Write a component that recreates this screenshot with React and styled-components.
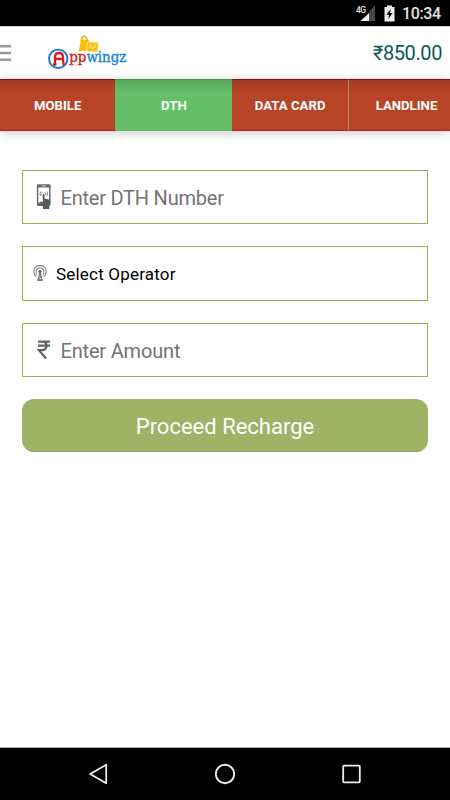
import React from "react";
import styled, { createGlobalStyle } from "styled-components";

const Global = createGlobalStyle`
  * { box-sizing: border-box; }
  body { margin: 0; background: #fff; font-family: Roboto, "Noto Sans", sans-serif; overflow: hidden; }
  svg { display: block; flex: none; }
`;

const Screen = styled.div`
  width: 450px;
  height: 800px;
  display: flex;
  flex-direction: column;
  overflow: hidden;
  background: #fff;
`;

const StatusBar = styled.div`
  height: 26px;
  flex: none;
  display: flex;
  align-items: center;
  justify-content: flex-end;
  gap: 8px;
  padding-right: 8px;
  background: #000;
  color: #e4e4e4;
`;

const Clock = styled.span`
  width: 40px;
  margin-left: -1px;
  font-size: 16px;
  font-weight: 500;
  letter-spacing: -0.35px;
  line-height: 26px;
  padding-top: 2px;
  white-space: nowrap;
`;

const Header = styled.header`
  height: 53px;
  flex: none;
  display: flex;
  align-items: center;
  padding-right: 8px;
  border-top: 1px solid #d4d4d4;
  background: #fff;
`;

const Logo = styled.div`
  margin-left: 36px;
`;

const Balance = styled.span`
  margin-left: auto;
  font-size: 20px;
  line-height: 24px;
  letter-spacing: -0.4px;
  color: #075b59;
`;

const Tabs = styled.nav`
  height: 52px;
  flex: none;
  display: flex;
  box-shadow: 0 2px 10px rgba(0, 0, 0, 0.2);
`;

const Tab = styled.div`
  width: ${(p) => p.$width}px;
  flex: none;
  display: flex;
  align-items: center;
  justify-content: center;
  border-top: 1px solid ${(p) => (p.$active ? "#46924a" : "#8b0d06")};
  border-bottom: 1px solid ${(p) => (p.$active ? "#5cb860" : "#bd1d06")};
  border-left: ${(p) => (p.$divider ? "1px solid #84a550" : "none")};
  background: linear-gradient(rgba(0, 0, 0, 0.12), transparent 14px),
    ${(p) => (p.$active ? "#65bf69" : "#b84427")};
  color: #fff;
  font-size: 13.2px;
  font-weight: 700;
  white-space: nowrap;
`;

const Form = styled.main`
  flex: 1;
  display: flex;
  flex-direction: column;
  padding: 38.5px 22px 0;
`;

const Field = styled.div`
  height: 54.5px;
  flex: none;
  margin-bottom: 22px;
  display: flex;
  align-items: center;
  padding-left: ${(p) => p.$pad}px;
  border: 1.3px solid #9bb353;
  background: #fff;
`;

const FieldText = styled.span`
  margin-left: ${(p) => p.$gap}px;
  padding-top: 2px;
  font-size: ${(p) => p.$size}px;
  letter-spacing: ${(p) => p.$tracking}px;
  color: ${(p) => p.$color};
`;

const Submit = styled.button`
  height: 52.5px;
  flex: none;
  border: 0;
  border-radius: 12px;
  border-bottom: 1px solid #92a955;
  background: #9fb266;
  color: #fff;
  font-family: inherit;
  font-size: 22px;
  padding: 3px 0 0;
`;

const NavBar = styled.footer`
  height: 53px;
  flex: none;
  display: flex;
  align-items: center;
  justify-content: space-between;
  padding: 0 85px;
  border-top: 1px solid #aaa;
  background: #000;
`;

const SignalIcon = () => (
  <svg width="20" height="18" viewBox="0 0 20 18">
    <path d="M4.500 17 13 9v8z" fill="#eee" />
    <path d="M13 8l6-7v16h-6z" fill="#484848" />
    <text x="0" y="8.500" fontSize="8.500" fontWeight="500" fontFamily="Roboto, sans-serif" textLength="10" fill="#e4e4e4">4G</text>
  </svg>
);

const BatteryIcon = () => (
  <svg width="11" height="17" viewBox="0 0 11 17">
    <path d="M3 .5h5V2h2.500v14.500H.5V2H3z" fill="#eee" />
    <path d="M6.700 4 2.400 9.700h2.700l-.8 4.200 4.300-6H6z" fill="#000" />
  </svg>
);

const MenuIcon = () => (
  <svg width="12" height="18" viewBox="0 0 12 18">
    <path d="M0 2.200h11M0 9h11M0 15.700h11" stroke="#9a9a9a" strokeWidth="2.500" />
  </svg>
);

const LogoMark = () => (
  <svg width="92" height="36" viewBox="0 0 92 36">
    <path d="M33 4.500 40.800 5l2 10.500-12 .8z" fill="#fdbd0c" />
    <path d="M39.500 6.800 50.500 7.200 49.800 17l-11.200-.6z" fill="#ffc20c" stroke="#fff" strokeWidth=".6" />
    <path d="M33.500 7q-.2-5.600 2.400-5.600T39.600 6.500" fill="none" stroke="#f5b408" strokeWidth="1.700" />
    <path d="M42 9.500q.2 3.800 2.800 3.800t2.800-3.800" fill="none" stroke="#fff0bd" strokeWidth="1" />
    <circle cx="10.200" cy="23.800" r="9.200" fill="#fff" stroke="#1779d3" strokeWidth="1.900" />
    <path d="M7 29.500V22q0-4 4-4t4 4.500q0 4 .8 8M7 24h8M5 29.500h3.500" fill="none" stroke="#d81b1b" strokeWidth="2.300" />
    <text x="21.300" y="27" fontFamily="'DejaVu Serif', serif" fontSize="14.500" textLength="57" lengthAdjust="spacingAndGlyphs" fill="#cf2323" stroke="#cf2323" strokeWidth=".4">
      pp<tspan fill="#1683d8" stroke="#1683d8">wingz</tspan>
    </text>
  </svg>
);

const PhoneTapIcon = () => (
  <svg width="16" height="26" viewBox="0 0 16 26">
    <rect x="1.600" y="1.200" width="12.200" height="20" rx="1" fill="#fff" stroke="#68686b" strokeWidth="1.500" />
    <path d="M1 .5h13.500V3.500H1zM1 18.500h6l1 3H1z" fill="#68686b" />
    <path d="M5.500 2h4.500" stroke="#eee" strokeWidth=".8" />
    <path d="M4.700 7.500q-1.500 2.300 0 4.600M10.800 7.500q1.500 2.300 0 4.600M6.200 8.500q-1 1.400 0 2.800M9.300 8.500q1 1.400 0 2.800" fill="none" stroke="#888" strokeWidth="1" />
    <path d="M6.800 10.500q.9-1 1.800 0V14.500l4.700 1.200q1.200.4 1 1.800l-1 4V25H7v-2.500l-3-4.200q.2-1.400 2.800 0z" fill="#58595d" />
  </svg>
);

const AntennaIcon = () => (
  <svg width="14" height="18" viewBox="0 0 14 18">
    <g fill="none" stroke="#808080" strokeWidth="1.100">
      <path d="M3.300 12.500A6.200 6.200 0 1 1 10.700 12.500" />
      <path d="M4.200 10.500A3.900 3.900 0 1 1 9.800 10.500" />
      <path d="M7 8 4.700 16.500h4.600zM5.800 12h2.600l-3 3.500h3.500" />
    </g>
    <circle cx="7" cy="7.500" r="1.600" fill="#666" />
  </svg>
);

const RupeeIcon = () => (
  <svg width="14" height="20" viewBox="0 0 14 20">
    <path d="M1 1.700h12M1 5.700h12M1.500 1.700H5q4.500 0 4.500 4T5 10.200H2l7 8.300" fill="none" stroke="#626265" strokeWidth="2.200" />
  </svg>
);

const BackIcon = () => (
  <svg width="28" height="24" viewBox="0 0 28 24">
    <path d="M21.200 2.700v18.600L5.200 12z" fill="none" stroke="#eee" strokeWidth="1.800" strokeLinejoin="round" />
  </svg>
);

const HomeIcon = () => (
  <svg width="24" height="24" viewBox="0 0 24 24">
    <circle cx="12" cy="12" r="9.200" fill="none" stroke="#eee" strokeWidth="1.900" />
  </svg>
);

const RecentIcon = () => (
  <svg width="28" height="24" viewBox="0 0 28 24">
    <rect x="6.200" y="3.700" width="16.600" height="16.600" rx=".8" fill="none" stroke="#eee" strokeWidth="1.800" />
  </svg>
);

export default function App() {
  return (
    <>
      <Global />
      <Screen>
        <StatusBar>
          <SignalIcon />
          <BatteryIcon />
          <Clock>10:34</Clock>
        </StatusBar>
        <Header>
          <MenuIcon />
          <Logo><LogoMark /></Logo>
          <Balance>₹850.00</Balance>
        </Header>
        <Tabs>
          <Tab $width={115.4}>MOBILE</Tab>
          <Tab $width={117} $active>DTH</Tab>
          <Tab $width={115.6}>DATA CARD</Tab>
          <Tab $width={116} $divider>LANDLINE</Tab>
        </Tabs>
        <Form>
          <Field $pad={13}>
            <PhoneTapIcon />
            <FieldText $gap={8.5} $size={20} $tracking={-0.22} $color="#737373">Enter DTH Number</FieldText>
          </Field>
          <Field $pad={10}>
            <AntennaIcon />
            <FieldText $gap={9} $size={17} $tracking={0.2} $color="#000">Select Operator</FieldText>
          </Field>
          <Field $pad={14}>
            <RupeeIcon />
            <FieldText $gap={9.5} $size={20} $tracking={-0.18} $color="#737373">Enter Amount</FieldText>
          </Field>
          <Submit>Proceed Recharge</Submit>
        </Form>
        <NavBar>
          <BackIcon />
          <HomeIcon />
          <RecentIcon />
        </NavBar>
      </Screen>
    </>
  );
}
